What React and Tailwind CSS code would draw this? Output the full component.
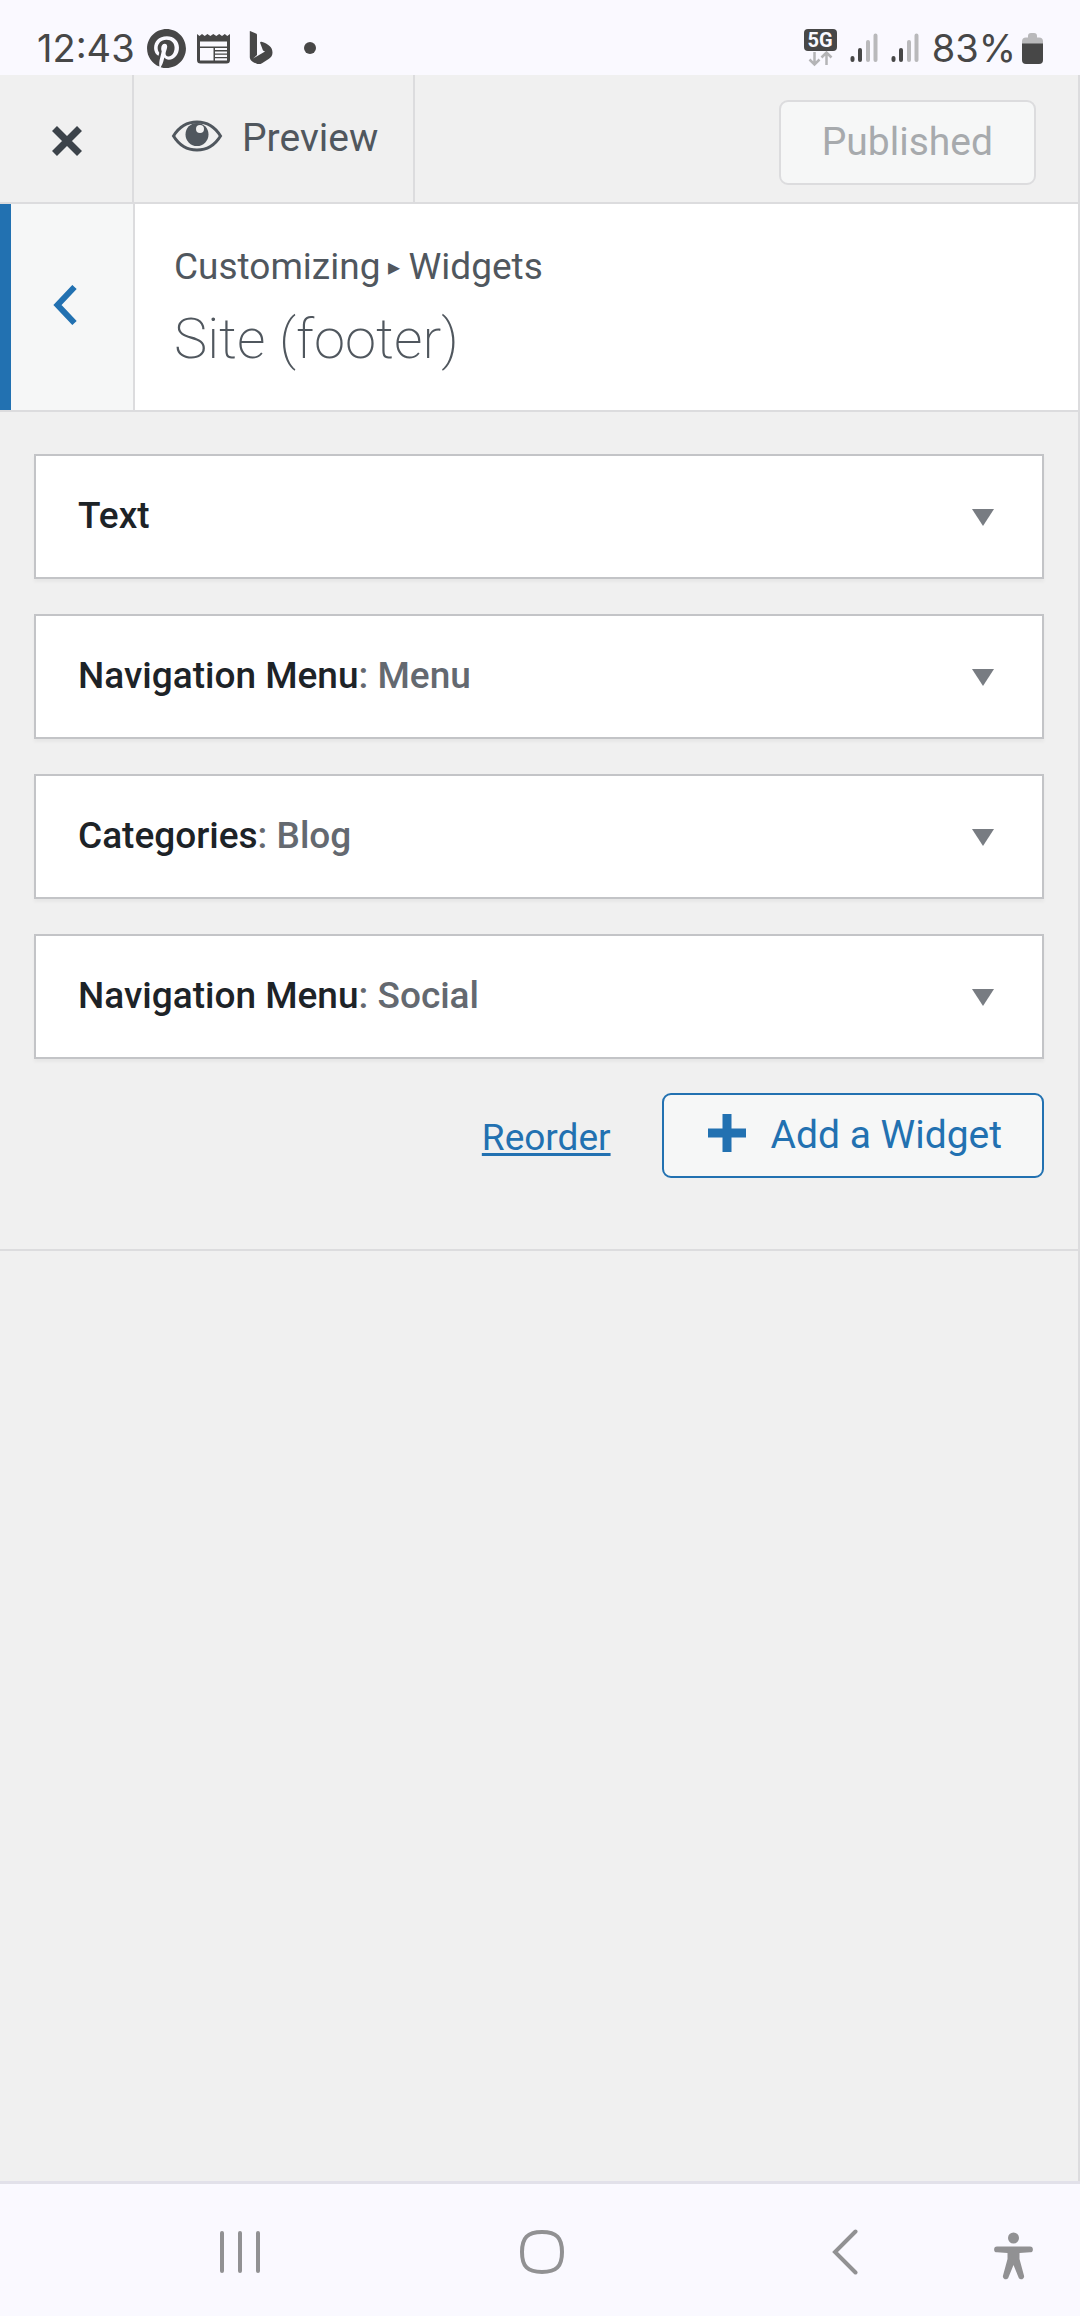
import React, { useState } from "react";
import { SiPinterest } from "react-icons/si";

const widgets = [
  { id: "text-1", name: "Text", title: "" },
  { id: "nav-1", name: "Navigation Menu", title: "Menu" },
  { id: "categories-1", name: "Categories", title: "Blog" },
  { id: "nav-2", name: "Navigation Menu", title: "Social" },
];

const NewsIcon = () => (
  <svg viewBox="0 0 33 31" className="w-[33px] h-[31px]" aria-hidden="true">
    <path
      fill="currentColor"
      d="M0 1l2.5 2L5 1l2.7 2L10.400 1l3 2 2.900-2 3 2 2.900-2 2.800 2L27.800 1l2.500 2L33 1v26a3.500 3.500 0 0 1-3.500 3.500h-26A3.500 3.500 0 0 1 0 27z"
    />
    <path fill="#faf9ff" d="M3 8.500h27v5H3zM3 15h13.500v12.500H3zM18 15h12v2.100H18zM18 18.400h12v2.100H18zM18 21.800h12v2.100H18zM18 25.200h12v2.300H18z" />
  </svg>
);

const BingIcon = () => (
  <svg viewBox="0 0 24 34" className="w-6 h-[34px]" aria-hidden="true">
    <path
      fill="currentColor"
      d="M1 0l6 2.500c.8.300 1 .9 1 1.600V24l-4 3.500L16 20.500l-2-1-2.800-7.500c-.3-.9.300-1.600 1.200-1.300 7 2.200 11.100 5.300 11.100 10.800 0 2.700-1.300 4.900-3.500 6.300l-7 4.400c-2 1.200-4.300 1.100-6.200 0C2.500 30.800.8 28.500.8 26V.3z"
    />
  </svg>
);

const NetworkIcon = () => (
  <svg viewBox="0 0 33 38" className="w-[33px] h-[38px]" aria-hidden="true">
    <rect width="33" height="22" rx="4" fill="#474747" />
    <text x="16" y="18" textAnchor="middle" fontFamily="Roboto, sans-serif" fontSize="20" fontWeight="700" fill="#faf9ff">
      5G
    </text>
    <path d="M10.500 23v12M5.500 30.500l5 5 5-5M22.500 36V24M17.500 28.500l5-5 5 5" fill="none" stroke="#b4b4b6" strokeWidth="2.500" />
  </svg>
);

const SignalIcon = () => (
  <svg viewBox="0 0 28 30" className="w-7 h-[30px]" aria-hidden="true">
    <g strokeWidth="4" strokeLinecap="round">
      <path d="M2.500 25v2M10 17v10" stroke="#474747" />
      <path d="M18 9v18M25.500 2.500V27" stroke="#b9b9bb" />
    </g>
  </svg>
);

const BatteryIcon = () => (
  <svg viewBox="0 0 21 31" className="w-[21px] h-[31px]" aria-hidden="true">
    <path fill="#b9b9bb" d="M6 3a3 3 0 0 1 3-3h3a3 3 0 0 1 3 3v1.500h2a4 4 0 0 1 4 4V12H0V8.500a4 4 0 0 1 4-4h2z" />
    <path fill="#474747" d="M0 10.500h21V27a4 4 0 0 1-4 4H4a4 4 0 0 1-4-4z" />
  </svg>
);

const StatusBar = () => (
  <div className="flex h-[75px] items-center justify-between bg-[#faf9ff] px-[37px] pt-[21px] text-[#474747]">
    <div className="flex items-center">
      <time className="font-['Inter'] text-[38px] leading-[52px]">12:43</time>
      <SiPinterest className="ml-3 size-[39px]" />
      <span className="ml-[11px]">
        <NewsIcon />
      </span>
      <span className="ml-[19px]">
        <BingIcon />
      </span>
      <span className="ml-[31px] size-3 rounded-full bg-[#474747]" />
    </div>
    <div className="flex items-center gap-1.5">
      <div className="flex items-center gap-[13px]">
        <NetworkIcon />
        <SignalIcon />
        <SignalIcon />
        <span className="font-['Inter'] text-[38px] leading-[52px]">83%</span>
      </div>
      <BatteryIcon />
    </div>
  </div>
);

const HeaderActions = () => (
  <header className="flex h-[129px] border-b-2 border-[#dcdcde]">
    <button type="button" aria-label="Close the Customizer" className="flex w-[134px] items-center justify-center border-r-2 border-[#dcdcde] pl-0.5 pt-1 text-[#3c434a]">
      <svg viewBox="0 0 30 30" className="size-[30px]" aria-hidden="true">
        <path d="M2.500 2.500l25 25M27.500 2.500l-25 25" stroke="currentColor" strokeWidth="7" fill="none" />
      </svg>
    </button>
    <button type="button" className="flex items-center gap-[19px] border-r-2 border-[#dcdcde] pb-0.5 pl-[37px] pr-[35px] text-[39px] leading-[52px] text-[#50575e]">
      <svg viewBox="0 0 52 32" className="mb-1 h-8 w-[52px]" aria-hidden="true">
        <path d="M2.500 16C8 7 16.500 2 26 2s18 5 23.500 14C44 25 35.500 30 26 30S8 25 2.500 16z" fill="none" stroke="currentColor" strokeWidth="3" />
        <circle cx="26" cy="14.500" r="11.500" fill="currentColor" />
        <circle cx="29" cy="9" r="4" fill="#f0f0f0" />
      </svg>
      Preview
    </button>
    <button type="button" disabled className="ml-auto mr-[42px] mt-[25px] h-[85px] rounded-[9px] border-2 border-[#dcdcde] bg-[#f6f7f7] px-[41px] pb-0.5 text-[39px] leading-[52px] text-[#a7aaad]">
      Published
    </button>
  </header>
);

const SectionTitle = () => (
  <div className="flex h-[208px] border-b-2 border-[#dcdcde] bg-white">
    <button type="button" aria-label="Back" className="flex w-[135px] items-center justify-center border-l-[11px] border-r-2 border-l-[#2271b1] border-r-[#dcdcde] bg-[#f6f7f7] pb-1 pr-3.5 text-[#2271b1]">
      <svg viewBox="0 0 24 40" className="h-10 w-6" aria-hidden="true">
        <path d="M21.500 2L4.500 20l17 18" fill="none" stroke="currentColor" strokeWidth="6" />
      </svg>
    </button>
    <div className="flex flex-col justify-center pl-[39px] pt-1 text-[#50575e]">
      <span className="flex items-center gap-2 text-[37px] leading-[60px]">
        Customizing <span className="text-[24px]">▸</span> Widgets
      </span>
      <h1 className="text-[56px] font-extralight leading-[84px]">Site (footer)</h1>
    </div>
  </div>
);

const WidgetCard = ({ widget, open, onToggle }) => (
  <li className="border-2 border-[#c3c4c7] bg-white shadow-[0_3px_3px_rgba(0,0,0,0.04)]">
    <button type="button" aria-expanded={open} onClick={onToggle} className="flex h-[121px] w-full items-center justify-between pl-[42px] pr-12 text-left">
      <h3 className="pb-0.5 text-[37px] font-medium leading-[48px] text-[#1d2327]">
        {widget.name}
        {widget.title && <span className="text-[#646970]">: {widget.title}</span>}
      </h3>
      <svg viewBox="0 0 22 17" className="mt-0.5 h-[17px] w-[22px] text-[#787c82]" aria-hidden="true">
        <path d="M0 0h22L11 17z" fill="currentColor" />
      </svg>
    </button>
  </li>
);

const SystemNav = () => (
  <nav className="flex h-[135px] items-center border-t-[3px] border-[#e2e1ea] bg-[#faf9ff] pl-[89px] pr-12 pt-[3px] text-[#919193]">
    <button type="button" aria-label="Recents" className="flex flex-1 justify-center">
      <svg viewBox="0 0 40 44" className="h-11 w-10" fill="none" stroke="currentColor" strokeWidth="4" strokeLinecap="round">
        <path d="M2 3v38M20 3v38M38 3v38" />
      </svg>
    </button>
    <button type="button" aria-label="Home" className="flex flex-1 justify-center">
      <svg viewBox="0 0 44 44" className="size-11" fill="none" stroke="currentColor" strokeWidth="4">
        <path d="M22 2c14.500 0 20 5.500 20 20s-5.500 20-20 20S2 36.500 2 22 7.500 2 22 2z" />
      </svg>
    </button>
    <button type="button" aria-label="Back" className="flex flex-1 justify-center">
      <svg viewBox="0 0 26 46" className="h-[46px] w-[26px]" fill="none" stroke="currentColor" strokeWidth="4" strokeLinecap="round">
        <path d="M23.500 2.500L3 23l20.500 20.500" />
      </svg>
    </button>
    <button type="button" aria-label="Accessibility" className="flex w-9 justify-center pt-2">
      <svg viewBox="0 0 39 48" className="h-12 w-[39px] shrink-0" fill="currentColor">
        <circle cx="19.500" cy="6" r="5.500" />
        <path d="M3 14.500h33a2.900 2.900 0 0 1 0 5.800l-10.500.7v6l4.600 17a2.900 2.900 0 0 1-5.300 2L19.500 33l-5.300 13a2.900 2.900 0 0 1-5.300-2l4.600-17v-6L3 20.300a2.900 2.900 0 0 1 0-5.800z" />
      </svg>
    </button>
  </nav>
);

const App = () => {
  const [openId, setOpenId] = useState(null);

  return (
    <div className="flex min-h-screen flex-col bg-[#f0f0f0] font-['Roboto',sans-serif]">
      <StatusBar />
      <main className="flex-1 border-r-2 border-[#dcdcde]">
        <HeaderActions />
        <SectionTitle />

        <section className="border-b-2 border-[#dcdcde] px-[34px] pb-[71px] pt-[42px]">
          <ul className="flex flex-col gap-[35px]">
            {widgets.map((widget) => (
              <WidgetCard
                key={widget.id}
                widget={widget}
                open={openId === widget.id}
                onToggle={() => setOpenId(openId === widget.id ? null : widget.id)}
              />
            ))}
          </ul>

          {/* Reorder / add controls */}
          <div className="mt-[34px] flex items-center justify-end gap-[51px]">
            <a href="#reorder" className="pt-1 text-[37px] leading-[48px] text-[#2271b1] underline decoration-[3px] underline-offset-[3px]">
              Reorder
            </a>
            <button type="button" className="flex h-[85px] items-center gap-[25px] rounded-[9px] border-2 border-[#2271b1] bg-[#f6f7f7] pb-0.5 pl-11 pr-10 text-[39px] leading-[52px] text-[#2271b1]">
              <svg viewBox="0 0 38 38" className="mb-1 size-[38px]" aria-hidden="true">
                <path d="M19 0v38M0 19h38" stroke="currentColor" strokeWidth="9" fill="none" />
              </svg>
              Add a Widget
            </button>
          </div>
        </section>
      </main>
      <SystemNav />
    </div>
  );
};

export default App;
